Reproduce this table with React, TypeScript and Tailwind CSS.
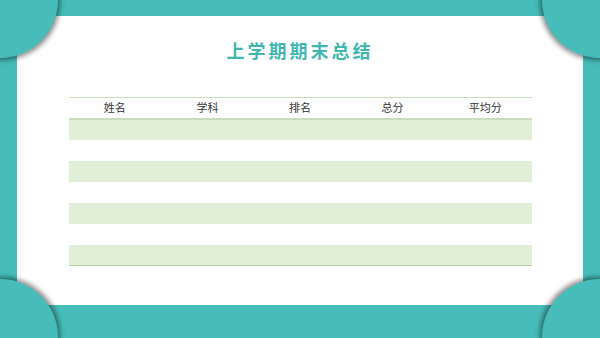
const HEADERS = ["姓名", "学科", "排名", "总分", "平均分"];
const ROWS = [0, 1, 2, 3, 4, 5, 6];

export default function App() {
  return (
    <div
      className="relative h-[338px] w-[600px] overflow-hidden bg-[#46bdb8] pb-[33px] pl-[17px] pr-[17px] pt-[16px]"
      style={{ fontFamily: '"Noto Sans CJK SC", "Noto Sans", sans-serif' }}
    >
      {/* Panel */}
      <div className="flex h-full w-full flex-col items-center bg-white pt-[21px]">
        <h1 className="text-[18px] font-bold leading-[26px] tracking-[3px] text-[#3fb6b1]">
          上学期期末总结
        </h1>

        <table className="mt-[34px] w-[463px] table-fixed border-collapse">
          <thead>
            <tr className="h-[21px] border-t border-b-2 border-t-[#c9ddbc] border-b-[#c9ddbc]">
              {HEADERS.map((h) => (
                <th key={h} className="p-0 text-center text-[11px] font-normal leading-[19px] text-[#333]">
                  {h}
                </th>
              ))}
            </tr>
          </thead>
          <tbody>
            {ROWS.map((r) => (
              <tr
                key={r}
                className={`h-[21px] ${r % 2 === 0 ? "bg-[#e1eed8]" : "bg-white"} ${r === ROWS.length - 1 ? "border-b border-[#b5d0a5]" : ""}`}
              >
                {HEADERS.map((h) => (
                  <td key={h} className="p-0" />
                ))}
              </tr>
            ))}
          </tbody>
        </table>
      </div>

      {/* Corner circles */}
      <div className="absolute left-[-58px] top-[-58px] h-[116px] w-[116px] rounded-full bg-[#46bdb8] shadow-[2px_2px_5px_rgba(0,0,0,0.45)]" />
      <div className="absolute right-[-58px] top-[-58px] h-[116px] w-[116px] rounded-full bg-[#46bdb8] shadow-[-2px_2px_5px_rgba(0,0,0,0.45)]" />
      <div className="absolute bottom-[-59px] left-[-58px] h-[118px] w-[116px] rounded-full bg-[#46bdb8] shadow-[2px_-2px_5px_rgba(0,0,0,0.45)]" />
      <div className="absolute bottom-[-59px] right-[-58px] h-[118px] w-[116px] rounded-full bg-[#46bdb8] shadow-[-2px_-2px_5px_rgba(0,0,0,0.45)]" />
    </div>
  );
}
